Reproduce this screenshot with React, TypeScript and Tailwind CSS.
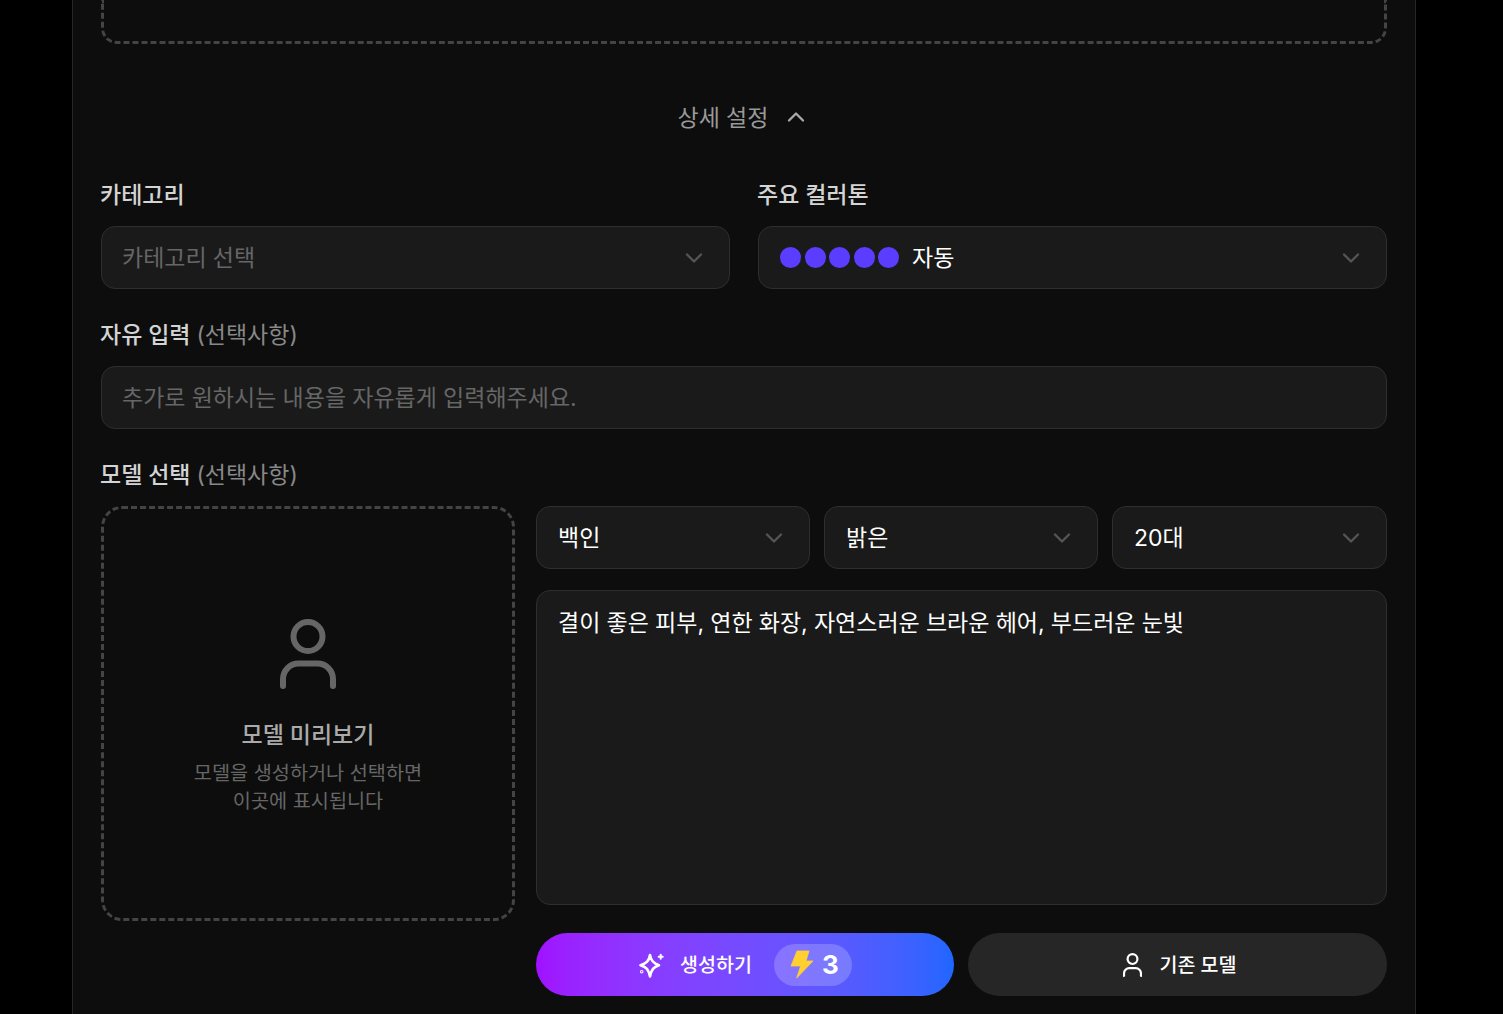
import { ChevronDown, ChevronUp } from 'lucide-react';

const selectBox = 'flex items-center justify-between h-[63px] pr-[21px] rounded-[14px] border border-[#2e2e2e] bg-[#1a1a1a] text-[23px] [word-spacing:-0.25px]';
const labelText = 'block h-[32px] -ml-px text-[23px] [word-spacing:-0.25px] leading-[34px] font-medium text-[#d4d4d4]';

const PersonIcon = ({ className, strokeWidth = 6 }: { className: string; strokeWidth?: number }) => (
  <svg viewBox="0 0 56 70" fill="none" stroke="currentColor" strokeWidth={strokeWidth} strokeLinecap="round" className={className}>
    <circle cx="28" cy="17.5" r="14.5" />
    <path d="M3 67V60A15.5 15.5 0 0 1 18.5 44.5H37.5A15.5 15.5 0 0 1 53 60V67" />
  </svg>
);

const Chevron = () => <ChevronDown className="w-[28px] h-[28px] text-[#555555]" strokeWidth={2} />;

const Select = ({ value }: { value: string }) => (
  <div className={`${selectBox} pl-[21px] text-white`}>
    <span className="pt-[2px]">{value}</span>
    <Chevron />
  </div>
);

function App() {
  return (
    <div className="h-screen overflow-hidden bg-black font-['Inter','Noto_Sans_CJK_KR',sans-serif]">
      <main className="w-[1344px] h-full ml-[72px] px-[28px] bg-[#0d0d0d] border-x border-[#262626]">
        <div className="h-[44px] border-[3px] border-t-0 border-dashed border-[#444444] rounded-b-[16px]" />

        <div className="flex items-center justify-center gap-[14px] h-[40px] mt-[53px] text-[23px] [word-spacing:-0.25px] text-[#999999]">
          <span className="pt-[2px]">상세 설정</span>
          <ChevronUp className="w-[28px] h-[28px] text-[#aaaaaa]" strokeWidth={2} />
        </div>

        <div className="grid grid-cols-2 gap-x-[28px] mt-[41px]">
          <div>
            <label className={`${labelText} mb-[16px]`}>카테고리</label>
            <div className={`${selectBox} pl-[20px] text-[#666666]`}>
              <span className="pt-[2px]">카테고리 선택</span>
              <Chevron />
            </div>
          </div>
          <div>
            <label className={`${labelText} mb-[16px]`}>주요 컬러톤</label>
            <div className={`${selectBox} pl-[21px] text-white`}>
              <div className="flex items-center">
                <div className="flex gap-[3.5px] mr-[13px]">
                  <span className="w-[21px] h-[21px] rounded-full bg-[#5a3dff]" />
                  <span className="w-[21px] h-[21px] rounded-full bg-[#5a3dff]" />
                  <span className="w-[21px] h-[21px] rounded-full bg-[#5a3dff]" />
                  <span className="w-[21px] h-[21px] rounded-full bg-[#5a3dff]" />
                  <span className="w-[21px] h-[21px] rounded-full bg-[#5a3dff]" />
                </div>
                <span className="pt-[2px]">자동</span>
              </div>
              <Chevron />
            </div>
          </div>
        </div>

        <label className={`${labelText} mt-[29px] mb-[16px]`}>
          자유 입력 <span className="font-normal text-[#888888]">(선택사항)</span>
        </label>
        <div className={`${selectBox} pl-[20px] text-[#666666]`}>
          <span className="pt-[2px]">추가로 원하시는 내용을 자유롭게 입력해주세요.</span>
        </div>

        <label className={`${labelText} mt-[29px] mb-[16px]`}>
          모델 선택 <span className="font-normal text-[#888888]">(선택사항)</span>
        </label>

        <div className="grid grid-cols-[414px_1fr] gap-x-[21px]">
          <div className="h-[415px] pt-[6px] flex flex-col items-center justify-center border-[3px] border-dashed border-[#444444] rounded-[21px]">
            <PersonIcon className="w-[56px] h-[70px] text-[#666666]" />
            <p className="mt-[30px] text-[23px] [word-spacing:-0.25px] leading-[32px] font-medium text-[#aaaaaa]">모델 미리보기</p>
            <p className="mt-[8px] text-[19.7px] leading-[28px] text-[#666666] text-center">
              모델을 생성하거나 선택하면
              <br />
              이곳에 표시됩니다
            </p>
          </div>

          <div>
            <div className="grid grid-cols-[274px_274px_1fr] gap-x-[14px]">
              <Select value="백인" />
              <Select value="밝은" />
              <Select value="20대" />
            </div>
            <div className="h-[315px] mt-[21px] px-[21px] py-[15px] rounded-[14px] border border-[#2e2e2e] bg-[#1a1a1a] text-[23px] [word-spacing:-0.25px] leading-[34px] text-white">
              결이 좋은 피부, 연한 화장, 자연스러운 브라운 헤어, 부드러운 눈빛
            </div>
            <div className="grid grid-cols-[418px_1fr] gap-x-[14px] mt-[28px]">
              <button className="flex items-center justify-center h-[63px] rounded-full bg-gradient-to-r from-[#a010ff] to-[#1f66ff] text-white">
                <svg viewBox="0 0 26 26" fill="none" stroke="currentColor" strokeWidth="2.6" strokeLinecap="round" strokeLinejoin="round" className="w-[26px] h-[26px]">
                  <path d="M12 3C13 9 15.5 11.5 21 13.2C15.5 15 13.5 17.5 12 24.5C10.5 17.5 8.5 15 2.5 13.2C8.5 11.5 11 9 12 3Z" />
                  <path d="M22.7 2.7V6.7M20.7 4.7H24.7" strokeWidth="2" />
                  <circle cx="3.7" cy="19.7" r="0.5" />
                </svg>
                <span className="ml-[16px] pt-[2px] text-[19.5px] font-medium">생성하기</span>
                <span className="flex items-center gap-[8px] ml-[22px] pl-[16px] w-[78px] h-[42px] rounded-full bg-white/20">
                  <svg viewBox="0 0 24 29" className="w-[24px] h-[29px]">
                    <path d="M7 1H19L16 11H23L6.7 28L10.7 16H1Z" fill="#ffd02f" stroke="#ffd02f" strokeWidth="0.8" strokeLinejoin="round" />
                  </svg>
                  <span className="text-[26px] font-bold">3</span>
                </span>
              </button>
              <button className="flex items-center justify-center h-[63px] pl-[4px] rounded-full bg-[#262626] text-white">
                <PersonIcon className="w-[19px] h-[24px]" strokeWidth={6.5} />
                <span className="ml-[18px] pt-[2px] text-[19.5px] font-medium">기존 모델</span>
              </button>
            </div>
          </div>
        </div>
      </main>
    </div>
  );
}

export default App;
